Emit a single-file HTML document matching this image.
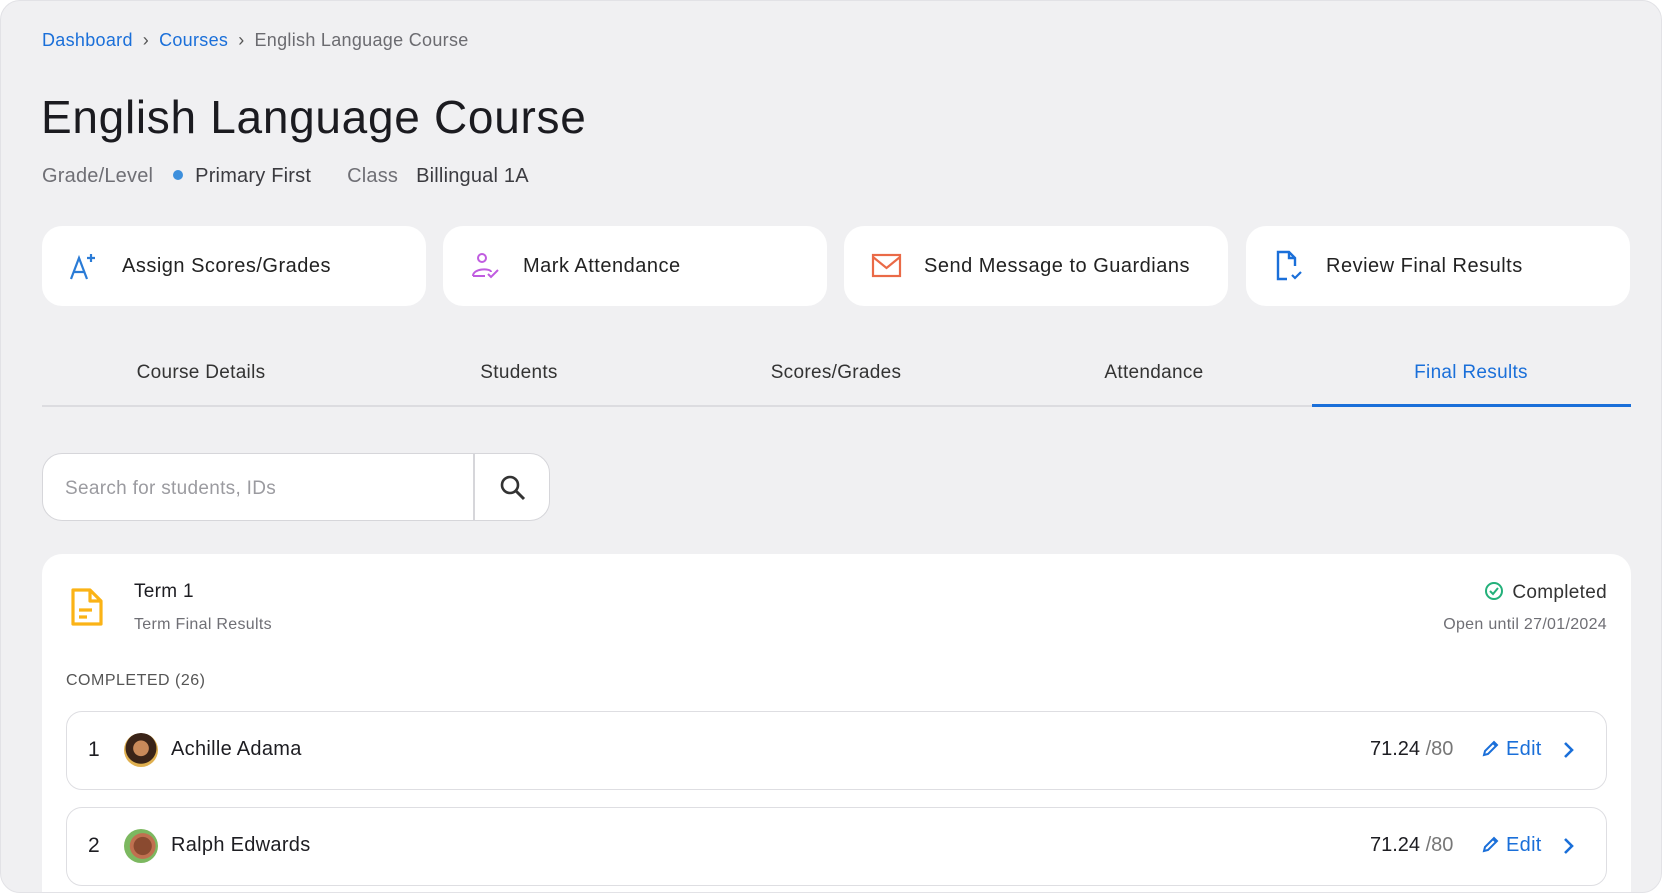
<!DOCTYPE html>
<html><head><meta charset="utf-8"><style>
*{box-sizing:border-box;margin:0;padding:0}
body{width:1664px;height:895px;overflow:hidden;background:#fff;font-family:"Liberation Sans",Arial,sans-serif;color:#1d1d22}
.frame{position:absolute;left:0;top:0;width:1662px;height:893px;background:#f0f0f2;border:1px solid #e2e2e6;border-radius:20px;overflow:hidden}
.abs{position:absolute;white-space:nowrap}
.bc{top:29px;left:41px;font-size:18px;color:#6b6b70;letter-spacing:.3px}
.bc a{color:#1a6fd9;text-decoration:none}
.bc .s{margin:0 10px;color:#555}
.title{top:89px;left:40px;font-size:46px;color:#1b1b20;letter-spacing:.7px}
.meta{top:164px;left:41px;font-size:20px;color:#6f6f75;letter-spacing:.2px}
.meta b{font-weight:normal;color:#3b3b40}
.dot{display:inline-block;width:10px;height:10px;border-radius:50%;background:#3d8fdc;margin:0 12px 2px 20px}
.card{position:absolute;top:225px;width:384px;height:80px;background:#fff;border-radius:20px;font-size:20px;color:#222;letter-spacing:.5px}
.card svg{position:absolute;left:27px;top:24px}
.card span{position:absolute;left:80px;top:29px}
.tabs{position:absolute;top:340px;left:41px;width:1589px;height:66px;border-bottom:2px solid #dcdce0}
.tab{position:absolute;top:21px;width:318px;text-align:center;font-size:19px;color:#333;letter-spacing:.3px}
.tab.act{color:#1a6fd9}
.ul{position:absolute;left:1270px;bottom:-2px;width:319px;height:3px;background:#1a6fd9}
.search{position:absolute;left:41px;top:452px;width:508px;height:68px;border:1.5px solid #d6d6da;border-radius:20px;background:#fff}
.search .ph{position:absolute;left:22px;top:24px;font-size:19px;color:#9b9ba0;letter-spacing:.3px}
.search .dv{position:absolute;left:430px;top:0;width:1.5px;height:100%;background:#d6d6da}
.main{position:absolute;left:41px;top:553px;width:1589px;height:360px;background:#fff;border-radius:20px}
.row{position:absolute;left:24px;width:1541px;height:79px;border:1.5px solid #dedee2;border-radius:16px}
.row .n{position:absolute;left:21px;top:26px;font-size:21px}
.av{position:absolute;left:57px;top:21px;width:34px;height:34px;border-radius:50%}
.row .nm{position:absolute;left:104px;top:26px;font-size:20px;letter-spacing:.3px}
.row .sc{position:absolute;left:1303px;top:26px;font-size:20px}
.row .sc i{font-style:normal;color:#777}
.row .ed{position:absolute;left:1415px;top:26px;font-size:20px;color:#1a6fd9;letter-spacing:.3px}
.row .ed svg{vertical-align:-2px;margin-right:6px}
.row .ch{position:absolute;left:1495px;top:29px}
</style></head><body><div class="frame">
<div class="abs bc"><a>Dashboard</a><span class="s">&#x203A;</span><a>Courses</a><span class="s">&#x203A;</span>English Language Course</div>
<div class="abs title">English Language Course</div>
<div class="abs meta">Grade/Level<span class="dot"></span><b>Primary First</b><span style="margin-left:36px">Class</span><b style="margin-left:18px">Billingual 1A</b></div>

<div class="card" style="left:41px"><svg width="32" height="32" viewBox="0 0 32 32"><path d="M2 29 L10 8 L18 29 M5 22 H15" stroke="#2a7bd6" stroke-width="2.2" fill="none"/><path d="M22 4 V12 M18 8 H26" stroke="#2a7bd6" stroke-width="2.2"/></svg><span>Assign Scores/Grades</span></div>
<div class="card" style="left:442px"><svg width="32" height="32" viewBox="0 0 32 32"><circle cx="12" cy="8" r="4" stroke="#c05ce0" stroke-width="2" fill="none"/><path d="M3 26 C3 18 21 18 21 22 M3 26 H15" stroke="#c05ce0" stroke-width="2" fill="none"/><path d="M18 24 L21 27 L28 20" stroke="#c05ce0" stroke-width="2" fill="none"/></svg><span>Mark Attendance</span></div>
<div class="card" style="left:843px"><svg width="32" height="32" viewBox="0 0 32 32"><rect x="2" y="5" width="27" height="21" stroke="#ea6a47" stroke-width="2.2" fill="none"/><path d="M2 7 L15.5 18 L29 7" stroke="#ea6a47" stroke-width="2.2" fill="none"/></svg><span>Send Message to Guardians</span></div>
<div class="card" style="left:1245px"><svg width="32" height="32" viewBox="0 0 32 32"><path d="M14 29 H5 V2 H16 L22 8 V16 M16 2 V8 H22" stroke="#1a6fd9" stroke-width="2.4" fill="none"/><path d="M19 25 L22 28 L28 22" stroke="#1a6fd9" stroke-width="2.2" fill="none"/></svg><span>Review Final Results</span></div>

<div class="tabs">
<div class="tab" style="left:0">Course Details</div>
<div class="tab" style="left:318px">Students</div>
<div class="tab" style="left:635px">Scores/Grades</div>
<div class="tab" style="left:953px">Attendance</div>
<div class="tab act" style="left:1270px">Final Results</div>
<div class="ul"></div></div>

<div class="search"><div class="ph">Search for students, IDs</div><div class="dv"></div>
<svg style="position:absolute;left:456px;top:20px" width="28" height="28" viewBox="0 0 28 28"><circle cx="11" cy="11" r="8" stroke="#333" stroke-width="2.6" fill="none"/><path d="M17 17 L25 25" stroke="#333" stroke-width="3"/></svg></div>

<div class="main">
<svg style="position:absolute;left:28px;top:33px" width="34" height="40" viewBox="0 0 34 40"><path d="M3 3 H20 L31 14 V37 H3 Z M20 3 V14 H31" stroke="#fbb316" stroke-width="3.2" fill="none" stroke-linejoin="round"/><path d="M9 23 H22 M9 30 H17" stroke="#fbb316" stroke-width="3.2"/></svg>
<div class="abs" style="left:92px;top:27px;font-size:19px;letter-spacing:.3px">Term 1</div>
<div class="abs" style="left:92px;top:62px;font-size:16px;color:#6f6f75;letter-spacing:.3px">Term Final Results</div>
<div class="abs" style="right:24px;top:27px;font-size:19px;color:#333;letter-spacing:.3px"><svg width="20" height="20" viewBox="0 0 20 20" style="vertical-align:-3px;margin-right:8px"><circle cx="10" cy="10" r="8" stroke="#23b07a" stroke-width="2" fill="none"/><path d="M6 10 L9 13 L14 7" stroke="#23b07a" stroke-width="2" fill="none"/></svg>Completed</div>
<div class="abs" style="right:24px;top:62px;font-size:16px;color:#6f6f75;letter-spacing:.3px">Open until 27/01/2024</div>
<div class="abs" style="left:24px;top:118px;font-size:16px;color:#555;letter-spacing:.5px">COMPLETED (26)</div>

<div class="row" style="top:157px"><div class="n">1</div><div class="av" style="background:radial-gradient(circle at 50% 45%,#c98a5a 0 30%,#3a2418 32% 60%,#e0b050 62%)"></div><div class="nm">Achille Adama</div><div class="sc">71.24 <i>/80</i></div><div class="ed"><svg width="18" height="18" viewBox="0 0 18 18"><path d="M2 16 L3 12 L12 3 L15 6 L6 15 Z M11 4 L14 7" stroke="#1a6fd9" stroke-width="2" fill="none"/></svg>Edit</div><svg class="ch" width="12" height="18" viewBox="0 0 12 18"><path d="M3 2 L10 9 L3 16" stroke="#1a6fd9" stroke-width="2.6" fill="none"/></svg></div>
<div class="row" style="top:253px"><div class="n">2</div><div class="av" style="background:radial-gradient(circle at 55% 50%,#8a4a30 0 35%,#c07050 37% 50%,#7cb860 52%)"></div><div class="nm">Ralph Edwards</div><div class="sc">71.24 <i>/80</i></div><div class="ed"><svg width="18" height="18" viewBox="0 0 18 18"><path d="M2 16 L3 12 L12 3 L15 6 L6 15 Z M11 4 L14 7" stroke="#1a6fd9" stroke-width="2" fill="none"/></svg>Edit</div><svg class="ch" width="12" height="18" viewBox="0 0 12 18"><path d="M3 2 L10 9 L3 16" stroke="#1a6fd9" stroke-width="2.6" fill="none"/></svg></div>
</div>
</div></body></html>
